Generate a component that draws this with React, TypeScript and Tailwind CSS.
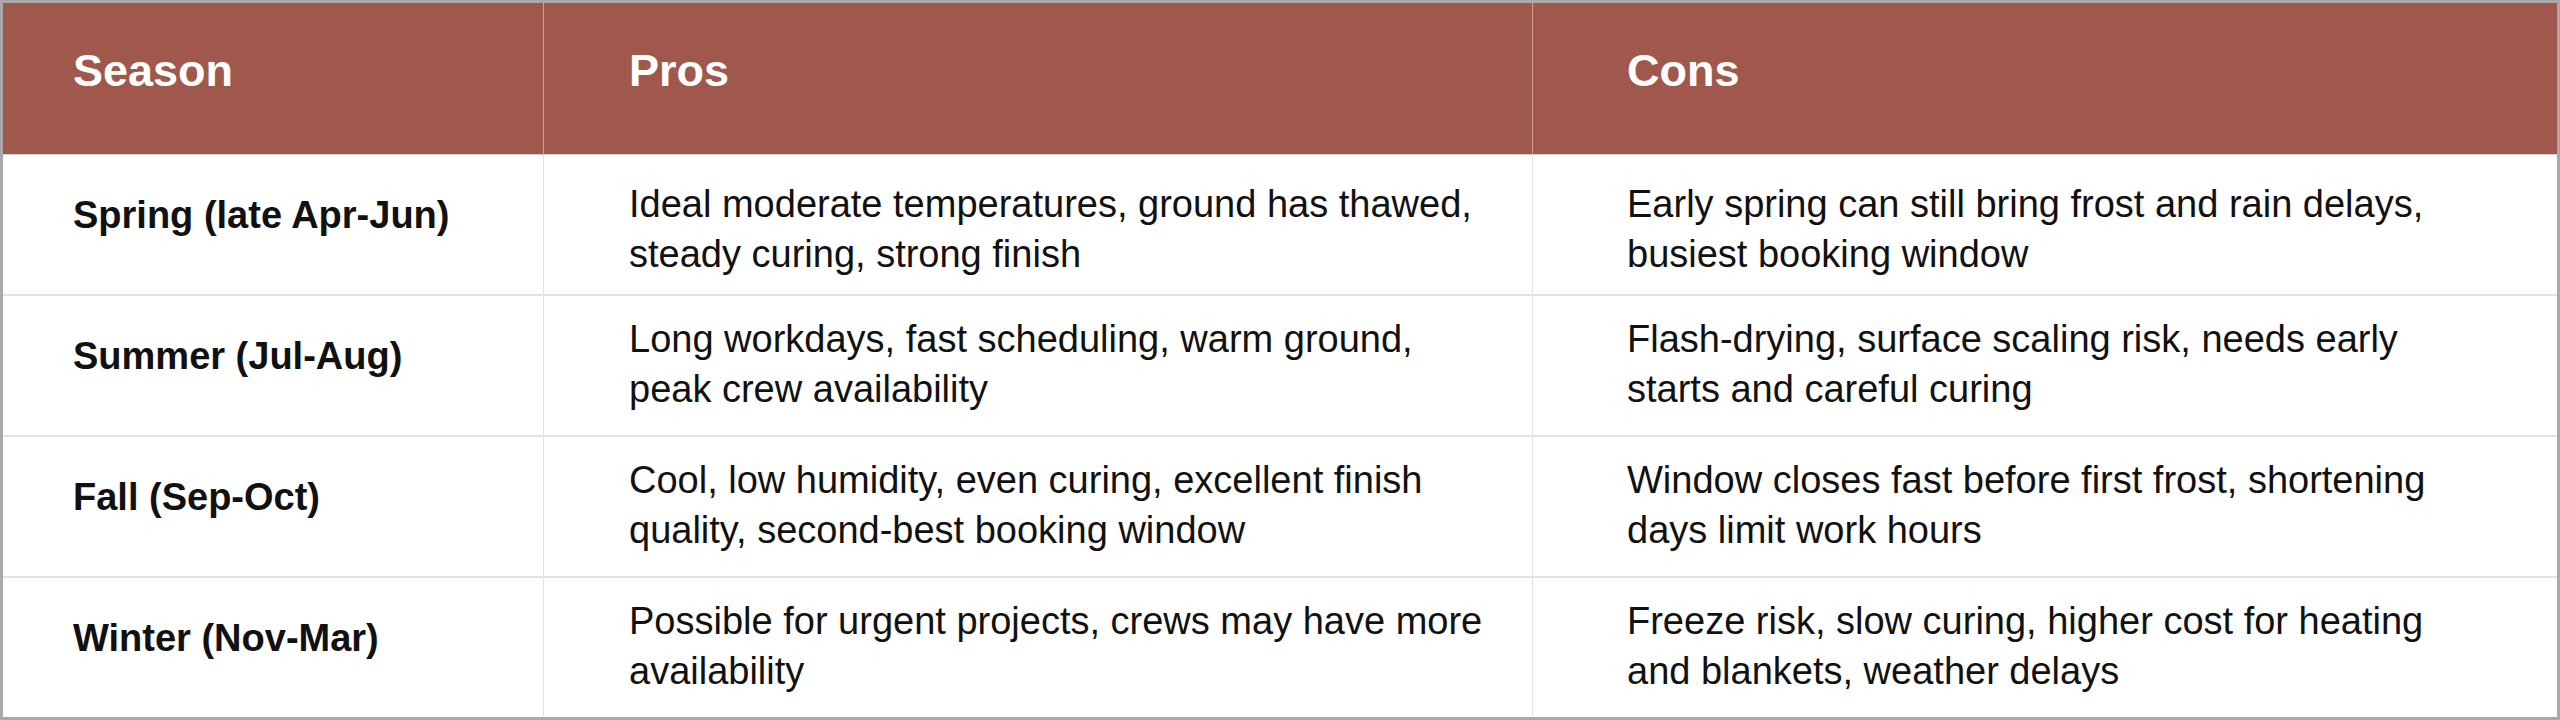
import React from "react";

type Row = { season: string; pros: string; cons: string };

const rows: Row[] = [
  {
    season: "Spring (late Apr-Jun)",
    pros: "Ideal moderate temperatures, ground has thawed, steady curing, strong finish",
    cons: "Early spring can still bring frost and rain delays, busiest booking window",
  },
  {
    season: "Summer (Jul-Aug)",
    pros: "Long workdays, fast scheduling, warm ground, peak crew availability",
    cons: "Flash-drying, surface scaling risk, needs early starts and careful curing",
  },
  {
    season: "Fall (Sep-Oct)",
    pros: "Cool, low humidity, even curing, excellent finish quality, second-best booking window",
    cons: "Window closes fast before first frost, shortening days limit work hours",
  },
  {
    season: "Winter (Nov-Mar)",
    pros: "Possible for urgent projects, crews may have more availability",
    cons: "Freeze risk, slow curing, higher cost for heating and blankets, weather delays",
  },
];

export default function App() {
  return (
    <div className="w-[2560px] h-[720px] overflow-hidden bg-white border-[3px] border-[#a9a9a9] font-['Liberation_Sans',Arial,sans-serif]">
      <div className="grid grid-cols-[541px_989px_1fr]">
        <div className="h-[152px] bg-[#a0574c] text-white font-bold text-[45px] leading-[58px] pt-[39px] pl-[70px] border-b border-r border-b-[#d6cfce] border-r-[#cf9f98]">
          Season
        </div>
        <div className="h-[152px] bg-[#a0574c] text-white font-bold text-[45px] leading-[58px] pt-[39px] pl-[85px] border-b border-r border-b-[#d6cfce] border-r-[#cf9f98]">
          Pros
        </div>
        <div className="h-[152px] bg-[#a0574c] text-white font-bold text-[45px] leading-[58px] pt-[39px] pl-[94px] border-b border-b-[#d6cfce]">
          Cons
        </div>

        {rows.map((r, i) => {
          const last = i === rows.length - 1;
          const first = i === 0;
          return (
            <React.Fragment key={r.season}>
              <div
                className={
                  last
                    ? "h-[138px] pt-[35px] pl-[70px] border-r border-[#e0e0e0] text-[38px] leading-[50px] font-bold text-[#111]"
                    : "h-[141px] pt-[35px] pl-[70px] border-r border-b-2 border-[#e3e3e3] text-[38px] leading-[50px] font-bold text-[#111]"
                }
              >
                {r.season}
              </div>
              <div
                className={
                  (last
                    ? "h-[138px] border-r border-[#e0e0e0] "
                    : "h-[141px] border-r border-b-2 border-[#e3e3e3] ") +
                  (first ? "pt-[24px] " : "pt-[18px] ") +
                  "pl-[85px] pr-[43px] text-[38px] leading-[50px] text-[#111]"
                }
              >
                {r.pros}
              </div>
              <div
                className={
                  (last ? "h-[138px] " : "h-[141px] border-b-2 border-[#e3e3e3] ") +
                  (first ? "pt-[24px] " : "pt-[18px] ") +
                  "pl-[94px] pr-[90px] text-[38px] leading-[50px] text-[#111]"
                }
              >
                {r.cons}
              </div>
            </React.Fragment>
          );
        })}
      </div>
    </div>
  );
}
